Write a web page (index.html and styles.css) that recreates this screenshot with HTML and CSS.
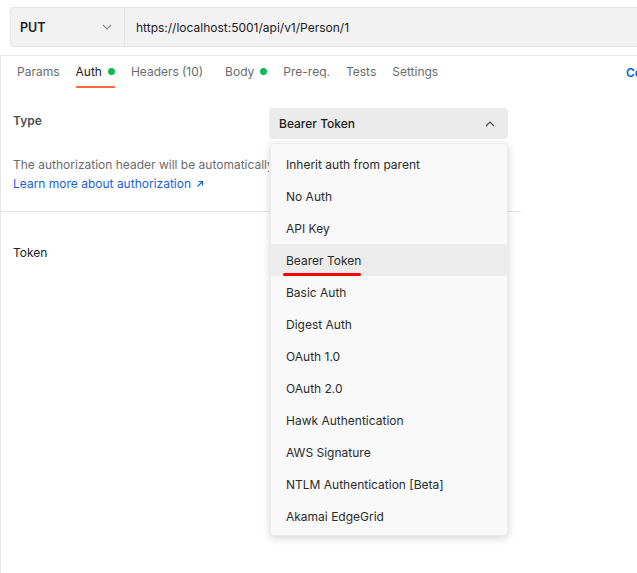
FILE: index.html
```html
<!DOCTYPE html>
<html lang="en">
<head>
<meta charset="utf-8">
<title>Auth</title>
<link rel="stylesheet" href="styles.css">
</head>
<body>
<div class="page">
  <div class="urlbar">
    <div class="method">
      <span class="method-name">PUT</span>
      <svg class="chev" width="10" height="6" viewBox="0 0 10 6"><polyline points="1,1 5,5 9,1" fill="none" stroke="#8a8a8a" stroke-width="1.1"/></svg>
    </div>
    <div class="url">https://localhost:5001/api/v1/Person/1</div>
  </div>

  <div class="main">
    <div class="tabs">
      <nav class="tablist">
        <span class="tab">Params</span>
        <span class="tab active">Auth<i class="dot"></i></span>
        <span class="tab">Headers <span class="count">(10)</span></span>
        <span class="tab">Body<i class="dot"></i></span>
        <span class="tab">Pre-req.</span>
        <span class="tab">Tests</span>
        <span class="tab">Settings</span>
      </nav>
      <span class="cookies">Cookies</span>
    </div>

    <div class="auth-pane">
      <div class="type-row">
        <div class="label">Type</div>
        <div class="select-wrap">
          <div class="select">
            <span>Bearer Token</span>
            <svg class="chev" width="10" height="6" viewBox="0 0 10 6"><polyline points="1,5 5,1 9,5" fill="none" stroke="#505050" stroke-width="1.2"/></svg>
          </div>
          <ul class="menu">
            <li>Inherit auth from parent</li>
            <li>No Auth</li>
            <li>API Key</li>
            <li class="hover">Bearer Token<span class="mark"></span></li>
            <li>Basic Auth</li>
            <li>Digest Auth</li>
            <li>OAuth 1.0</li>
            <li>OAuth 2.0</li>
            <li>Hawk Authentication</li>
            <li>AWS Signature</li>
            <li>NTLM Authentication [Beta]</li>
            <li>Akamai EdgeGrid</li>
          </ul>
        </div>
      </div>
      <p class="desc">The authorization header will be automatically generated when you send the request.</p>
      <a class="learn">Learn more about authorization <svg width="8" height="8" viewBox="0 0 8 8"><path d="M1.5 6.5 L6.5 1.5 M2.5 1.5 H6.5 V5.5" fill="none" stroke="#1a5fd6" stroke-width="1.2"/></svg></a>
      <div class="sep"></div>
      <div class="token">Token</div>
    </div>
  </div>
</div>
</body>
</html>
```

FILE: styles.css
```css
* { box-sizing: border-box; }
html, body { margin: 0; padding: 0; background: #fff; }
body {
  width: 637px;
  height: 573px;
  overflow: hidden;
  font-family: Inter, "Noto Sans", "Liberation Sans", sans-serif;
  font-size: 12px;
  color: #212121;
}
.page { width: 637px; }

.urlbar {
  display: flex;
  margin: 7px 0 0 10px;
  width: 660px;
  height: 40px;
  background: #f2f2f2;
  border: 1px solid #e4e4e4;
  border-radius: 4px 0 0 4px;
}
.method {
  width: 114px;
  display: flex;
  align-items: center;
  justify-content: space-between;
  padding: 0 12px 0 9px;
  border-right: 1px solid #e4e4e4;
}
.method-name { font-weight: 600; font-size: 12.5px; color: #212121; }
.url {
  display: flex;
  align-items: center;
  padding-left: 11px;
  font-size: 12px;
  color: #212121;
}

.main {
  margin-top: 8px;
  border-top: 1px solid #e6e6e6;
  border-left: 1px solid #e6e6e6;
  height: 520px;
}
.tabs {
  display: flex;
  justify-content: space-between;
  height: 32px;
  padding-left: 16px;
}
.tablist { display: flex; gap: 16px; }
.tab {
  display: flex;
  align-items: center;
  gap: 6px;
  height: 32px;
  color: #6b6b6b;
  border-bottom: 2px solid transparent;
  white-space: nowrap;
}
.tab.active { color: #212121; border-bottom-color: #ff6c37; }
.count { color: #6b6b6b; margin-left: -3px; margin-right: 6px; }
.dot { width: 7px; height: 7px; border-radius: 50%; background: #0cbb52; display: inline-block; }
.cookies {
  display: flex;
  align-items: center;
  color: #0265d2;
  font-weight: 600;
  margin-right: -36px;
  height: 32px;
}

.auth-pane {
  width: 520px;
  padding: 20px 0 0 12px;
}
.type-row { display: flex; height: 31px; }
.label {
  width: 256px;
  font-weight: 600;
  color: #505050;
  padding-top: 5px;
}
.select-wrap { position: relative; width: 239px; }
.select {
  height: 31px;
  background: #ebebeb;
  border-radius: 4px;
  display: flex;
  align-items: center;
  justify-content: space-between;
  padding: 0 13px 0 10px;
  font-weight: 500;
  color: #212121;
}
.menu {
  position: absolute;
  z-index: 5;
  top: 35px;
  left: 1px;
  width: 238px;
  margin: 0;
  padding: 4px 0 3px;
  list-style: none;
  background: #f9f9f9;
  border: 1px solid #ececec;
  border-radius: 4px;
  box-shadow: 0 2px 8px rgba(0, 0, 0, 0.18);
}
.menu li {
  position: relative;
  height: 32px;
  display: flex;
  align-items: center;
  padding-left: 15px;
  color: #2b2b2b;
}
.menu li.hover { background: #ececec; }
.mark {
  position: absolute;
  left: 12px;
  bottom: 0;
  width: 78px;
  height: 3px;
  border-radius: 2px;
  background: #ff0000;
}

.desc {
  width: 256px;
  overflow: hidden;
  margin: 16px 0 0;
  line-height: 19px;
  color: #6b6b6b;
  white-space: nowrap;
}
.learn {
  display: inline-flex;
  align-items: center;
  gap: 5px;
  line-height: 19px;
  color: #1a5fd6;
}
.sep {
  margin: 18px 0 0 -12px;
  border-top: 1px solid #e6e6e6;
}
.token {
  margin-top: 33px;
  color: #212121;
}
```
